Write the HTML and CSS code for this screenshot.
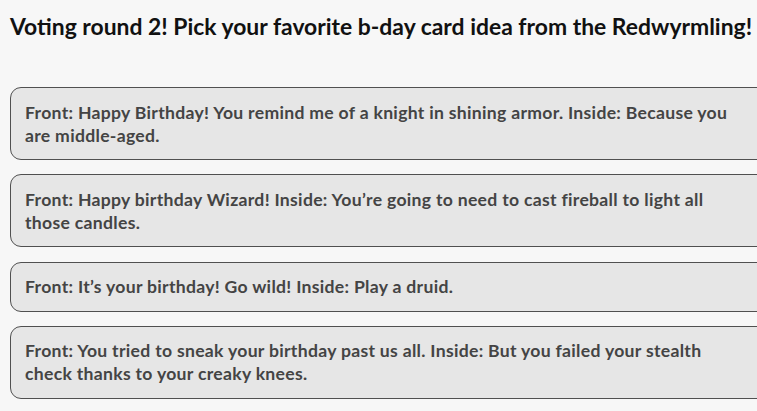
FILE: index.html
```html
<!DOCTYPE html>
<html>
<head>
<meta charset="utf-8">
<link rel="stylesheet" href="styles.css">
</head>
<body>
<div class="page">
  <h1 class="title">Voting round 2! Pick your favorite b-day card idea from the Redwyrmling!</h1>
  <div class="options">
    <div class="option">Front: Happy Birthday! You remind me of a knight in shining armor. Inside: Because you are middle-aged.</div>
    <div class="option">Front: Happy birthday Wizard! Inside: You’re going to need to cast fireball to light all those candles.</div>
    <div class="option">Front: It’s your birthday! Go wild! Inside: Play a druid.</div>
    <div class="option">Front: You tried to sneak your birthday past us all. Inside: But you failed your stealth check thanks to your creaky knees.</div>
  </div>
</div>
</body>
</html>
```
FILE: styles.css
```css
html, body {
  margin: 0;
  padding: 0;
  background: #f7f7f7;
  overflow: hidden;
}
.page {
  width: 800px;
  padding: 11px 0 0 10px;
  font-family: "Lato", "Noto Sans", sans-serif;
}
.title {
  margin: 0;
  font-size: 22.9px;
  line-height: 30px;
  font-weight: 700;
  color: #111;
  white-space: nowrap;
}
.options {
  margin-top: 46px;
  display: flex;
  flex-direction: column;
  gap: 14.3px;
}
.option {
  width: 718px;
  padding: 12.5px 30px 12.5px 14px;
  background: #e6e6e6;
  border: 1px solid #505050;
  border-radius: 11px;
  color: #444;
  font-size: 17.6px;
  line-height: 23px;
  font-weight: 700;
  letter-spacing: 0.3px;
}
```
